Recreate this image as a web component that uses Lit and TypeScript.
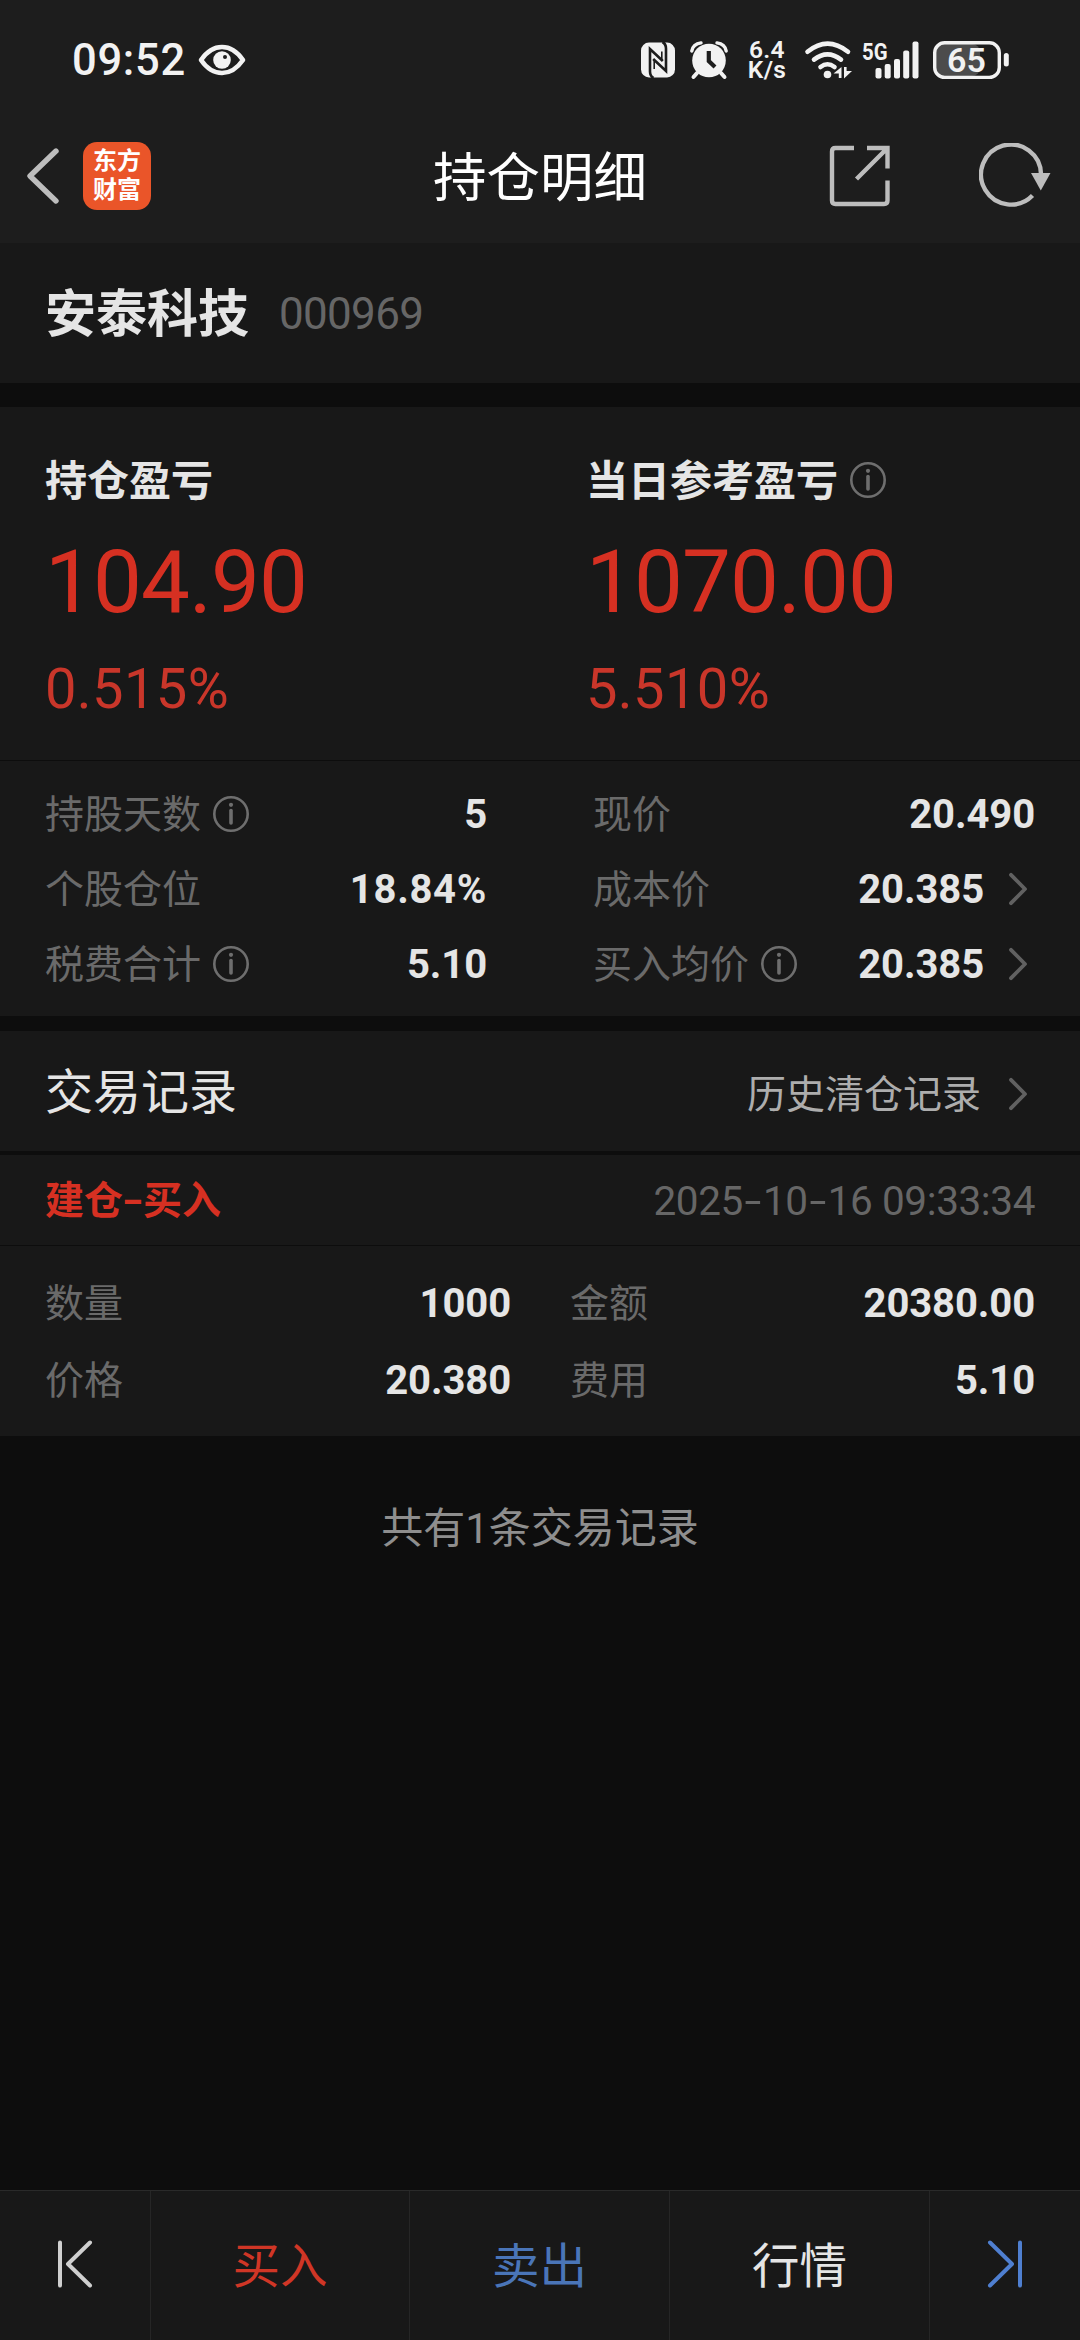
import { LitElement, html, css, svg, nothing } from "lit";
import { customElement, property } from "lit/decorators.js";

interface Stat {
  label: string;
  value: string;
  info?: boolean;
  link?: boolean;
}

const summary = [
  { label: "持仓盈亏", amount: "104.90", rate: "0.515%", info: false },
  { label: "当日参考盈亏", amount: "1070.00", rate: "5.510%", info: true },
];

const leftStats: Stat[] = [
  { label: "持股天数", value: "5", info: true },
  { label: "个股仓位", value: "18.84%" },
  { label: "税费合计", value: "5.10", info: true },
];

const rightStats: Stat[] = [
  { label: "现价", value: "20.490" },
  { label: "成本价", value: "20.385", link: true },
  { label: "买入均价", value: "20.385", info: true, link: true },
];

const tradeLeft: Stat[] = [
  { label: "数量", value: "1000" },
  { label: "价格", value: "20.380" },
];

const tradeRight: Stat[] = [
  { label: "金额", value: "20380.00" },
  { label: "费用", value: "5.10" },
];

const infoIcon = html`<svg class="info" width="38" height="38" viewBox="0 0 38 38">
  <circle cx="19" cy="19" r="16.7" fill="none" stroke="#6e6e6e" stroke-width="2.6" />
  <circle cx="19" cy="9.8" r="2.1" fill="#6e6e6e" />
  <path d="M19 15.5V28" stroke="#6e6e6e" stroke-width="3.6" stroke-linecap="round" />
</svg>`;

const chevron = html`<svg class="chev" width="20" height="34" viewBox="0 0 20 34">
  <path d="M3 2.8L17 17L3 31.2" fill="none" stroke="#616161" stroke-width="3.8" stroke-linecap="round" stroke-linejoin="round" />
</svg>`;

const withDashes = (text: string) =>
  text.split("-").map((part, i) => html`${i ? html`<span class="dash">-</span>` : nothing}${part}`);

@customElement("status-bar")
class StatusBar extends LitElement {
  static styles = css`
    :host {
      display: flex;
      align-items: center;
      box-sizing: border-box;
      height: 119px;
      padding: 0 70px 0 72px;
      color: #f2f2f2;
      font-family: Roboto, "Noto Sans CJK SC", sans-serif;
    }
    .time {
      width: 126px;
      margin-top: 2px;
      font-size: 43.5px;
      font-weight: 500;
      line-height: 50px;
      letter-spacing: 0.7px;
      white-space: nowrap;
    }
    svg {
      display: block;
      flex: none;
      overflow: visible;
    }
    .right {
      display: flex;
      align-items: center;
      margin-left: auto;
    }
    .nfc { margin-right: 15px; }
    .alarm { margin-right: 18px; }
    .speed {
      width: 42px;
      margin-right: 16px;
      font-size: 24.5px;
      font-weight: 600;
      line-height: 20px;
      text-align: center;
      letter-spacing: 0.3px;
    }
    .wifi { margin-right: 10px; }
    .signal { margin-right: 14px; }
    .net { font: 700 24.5px Roboto, sans-serif; }
    .level { font: 600 34px Roboto, sans-serif; }
  `;

  render() {
    return html`
      <span class="time">09:52</span>
      <svg width="48" height="32" viewBox="0 0 48 32">
        <path d="M3 16Q12 3 24 3T45 16Q36 29 24 29T3 16Z" fill="none" stroke="#f2f2f2" stroke-width="4.6" stroke-linejoin="round" />
        <circle cx="24" cy="16" r="8.8" fill="#f2f2f2" />
        <circle cx="27" cy="13" r="2" fill="#1d1d1d" />
      </svg>
      <div class="right">
        <svg class="nfc" width="34" height="36" viewBox="0 0 34 36">
          <rect x="0" y="0.6" width="34" height="34.8" rx="8" fill="#f2f2f2" />
          <g fill="none" stroke="#1d1d1d" stroke-width="2.6">
            <path d="M12.5 36Q9 34 9 29.5V7L21.8 19" />
            <path d="M21.5 0Q25 2 25 6.5V29L12.2 17" />
            <path d="M13.2 17V27M20.8 19V9.5" stroke-width="1.6" />
          </g>
        </svg>
        <svg class="alarm" width="38" height="38" viewBox="0 0 38 38">
          <circle cx="19" cy="19.5" r="16.8" fill="#f2f2f2" />
          <path d="M1.8 10Q3 3 11 1.9M36.2 10Q35 3 27 1.9" fill="none" stroke="#f2f2f2" stroke-width="3.4" stroke-linecap="round" />
          <path d="M7 32L3.5 36M31 32L34.5 36" stroke="#f2f2f2" stroke-width="4" stroke-linecap="round" />
          <path d="M18.8 10V20L25 26" fill="none" stroke="#1d1d1d" stroke-width="4.2" />
        </svg>
        <div class="speed">6.4<br />K/s</div>
        <svg class="wifi" width="48" height="38" viewBox="0 0 48 38">
          <g fill="none" stroke="#f2f2f2" stroke-width="4.6" stroke-linecap="round">
            <path d="M3.5 10.8Q23.5 -5.5 44 10.8" />
            <path d="M10 18.6Q23.5 8 37 18.6" />
            <path d="M16.5 26Q23.5 20.5 30.5 26" />
          </g>
          <circle cx="23.5" cy="33.5" r="3.8" fill="#f2f2f2" />
          <path d="M37.5 26V37H34.8V32.5H29.5ZM40 26H42.6V30H48L40 37.5Z" fill="#f2f2f2" />
        </svg>
        <svg class="signal" width="57" height="38" viewBox="0 0 57 38">
          <text class="net" x="0" y="18.6" fill="#f2f2f2" textLength="25.5" lengthAdjust="spacingAndGlyphs">5G</text>
          ${[[13.5, 27], [22.7, 23], [32, 18], [41.2, 9.5], [50.5, 0.6]].map(
            ([x, y]) => svg`<rect x=${x} y=${y} width="6" height=${37.6 - y} rx="2" fill="#f2f2f2" />`,
          )}
        </svg>
        <svg width="77" height="38" viewBox="0 0 77 38">
          <rect x="3" y="3" width="44" height="32" rx="8" fill="#4c4c4c" />
          <rect x="1.7" y="1.8" width="64.6" height="34.6" rx="10" fill="none" stroke="#f2f2f2" stroke-width="3.4" />
          <rect x="70.8" y="12" width="5" height="13.5" rx="2.5" fill="#f2f2f2" />
          <text class="level" x="33.5" y="31.2" fill="#f2f2f2" text-anchor="middle">65</text>
        </svg>
      </div>
    `;
  }
}

@customElement("nav-bar")
class NavBar extends LitElement {
  static styles = css`
    :host {
      display: grid;
      grid-template-columns: 1fr auto 1fr;
      align-items: center;
      box-sizing: border-box;
      height: 124px;
      padding: 0 29px 10px 25px;
      font-family: Roboto, "Noto Sans CJK SC", sans-serif;
    }
    svg { display: block; }
    .left, .right {
      display: flex;
      align-items: center;
    }
    .left { gap: 22px; }
    .right {
      justify-content: flex-end;
      gap: 88px;
    }
    .logo {
      display: flex;
      align-items: center;
      justify-content: center;
      width: 68px;
      height: 68px;
      border-radius: 14px;
      background: #ea5529;
      color: #fff;
      font-size: 24px;
      font-weight: 700;
      line-height: 29px;
      text-align: center;
    }
    .title {
      margin: 5px -2px 0 2px;
      color: #fff;
      font-size: 53.5px;
      font-weight: 400;
      line-height: 60px;
    }
  `;

  render() {
    return html`
      <div class="left">
        <svg width="36" height="60" viewBox="0 0 36 60">
          <path d="M31 5L5 30L31 55" fill="none" stroke="#bdbdbd" stroke-width="5.4" stroke-linecap="round" stroke-linejoin="round" />
        </svg>
        <div class="logo">东方<br />财富</div>
      </div>
      <div class="title">持仓明细</div>
      <div class="right">
        <svg width="62" height="62" viewBox="0 0 62 62">
          <g fill="none" stroke="#bdbdbd" stroke-width="4.4">
            <path d="M25 3H6.5Q3 3 3 6.5V55.5Q3 59 6.5 59H55Q58.5 59 58.5 55.5V35.5" />
            <path d="M38 3H58.5V23.5M58 3.5L27.5 34" />
          </g>
        </svg>
        <svg width="72" height="66" viewBox="0 0 72 66">
          <path d="M53.5 52.5A30 30 0 1 1 62 31" fill="none" stroke="#bdbdbd" stroke-width="4.4" />
          <path d="M52 30H71.5L61.8 47.5Z" fill="#bdbdbd" />
        </svg>
      </div>
    `;
  }
}

@customElement("stat-list")
class StatList extends LitElement {
  @property({ attribute: false }) items: Stat[] = [];

  static styles = css`
    :host {
      display: block;
      font-family: Roboto, "Noto Sans CJK SC", sans-serif;
    }
    .row {
      display: flex;
      align-items: center;
      height: var(--row-height, 75px);
    }
    .label {
      margin-top: 2px;
      color: #6a6a6a;
      font-size: 39px;
      line-height: 46px;
      white-space: nowrap;
    }
    .info { margin-left: 11px; }
    .value {
      margin-top: 2px;
      margin-left: auto;
      color: #e5e5e5;
      font-size: 40px;
      font-weight: 700;
      line-height: 46px;
      letter-spacing: -0.1px;
    }
    .percent { letter-spacing: 0.7px; }
    .chev { margin: 0 7px 0 24px; }
  `;

  render() {
    return this.items.map(
      (s) => html`<div class="row">
        <span class="label">${s.label}</span>
        ${s.info ? infoIcon : nothing}
        <span class="value ${s.value.endsWith("%") ? "percent" : ""}">${s.value}</span>
        ${s.link ? chevron : nothing}
      </div>`,
    );
  }
}

@customElement("action-bar")
class ActionBar extends LitElement {
  static styles = css`
    :host {
      display: grid;
      grid-template-columns: 151px 259px 260px 260px 150px;
      box-sizing: border-box;
      height: 150px;
      border-top: 1px solid #2a2a2a;
      background: #181818;
      font-family: Roboto, "Noto Sans CJK SC", sans-serif;
    }
    .cell {
      display: flex;
      align-items: center;
      justify-content: center;
      border-right: 1px solid #262626;
      font-size: 47.5px;
      line-height: 56px;
      padding-top: 2px;
    }
    .cell:last-child { border-right: 0; }
    .buy { color: #d03626; }
    .sell { color: #4a75b8; }
    .quote { color: #e5e5e5; }
    .icon { padding: 0 0 4px; }
  `;

  render() {
    return html`
      <div class="cell icon">
        <svg width="36" height="50" viewBox="0 0 36 50">
          <path d="M3 3.5V46.5M33 3.5L11 25L33 46.5" fill="none" stroke="#cfcfcf" stroke-width="4" stroke-linecap="round" stroke-linejoin="round" />
        </svg>
      </div>
      <div class="cell buy">买入</div>
      <div class="cell sell">卖出</div>
      <div class="cell quote">行情</div>
      <div class="cell icon">
        <svg width="36" height="50" viewBox="0 0 36 50">
          <path d="M33 3.5V46.5M3 3.5L25 25L3 46.5" fill="none" stroke="#4f7fd0" stroke-width="4" stroke-linecap="round" stroke-linejoin="round" />
        </svg>
      </div>
    `;
  }
}

@customElement("app-root")
class AppRoot extends LitElement {
  static styles = css`
    :host {
      display: flex;
      flex-direction: column;
      width: 1080px;
      height: 2340px;
      overflow: hidden;
      background: #0d0d0d;
      color: #e5e5e5;
      font-family: Roboto, "Noto Sans CJK SC", sans-serif;
    }
    .top {
      flex: none;
      background: #1d1d1d;
    }
    .panel { background: #181818; }
    .stock {
      display: flex;
      align-items: center;
      height: 140px;
      padding: 0 45px;
      gap: 30px;
    }
    .name {
      margin-top: 4px;
      font-size: 51px;
      font-weight: 700;
      line-height: 60px;
    }
    .code {
      margin-top: 1px;
      color: #666;
      font-size: 44px;
      font-weight: 400;
      line-height: 50px;
      letter-spacing: -0.7px;
    }
    .summary {
      display: grid;
      grid-template-columns: 541px 1fr;
      box-sizing: border-box;
      height: 353px;
      margin-top: 24px;
      padding: 48px 45px 0;
    }
    .caption {
      display: flex;
      align-items: center;
      height: 50px;
      gap: 11px;
      font-size: 42px;
      font-weight: 700;
      line-height: 50px;
    }
    .caption span { margin-top: 4px; }
    .amount {
      margin-top: 25px;
      color: #d63022;
      font-size: 87px;
      font-weight: 400;
      line-height: 104px;
      letter-spacing: -0.9px;
    }
    .rate {
      margin-top: 23px;
      color: #c9362a;
      font-size: 56px;
      line-height: 64px;
      letter-spacing: 0.4px;
    }
    .stats {
      display: grid;
      grid-template-columns: 442px 442px;
      column-gap: 106px;
      margin-top: 1px;
      padding: 15px 45px;
    }
    .records {
      display: flex;
      align-items: center;
      justify-content: space-between;
      height: 120px;
      margin-top: 15px;
      padding: 0 52px 0 45px;
    }
    .heading {
      margin-top: 3px;
      font-size: 48px;
      line-height: 56px;
    }
    .history {
      display: flex;
      align-items: center;
      gap: 27px;
      margin-top: 5px;
      color: #adadad;
      font-size: 39px;
      line-height: 46px;
    }
    .history span { margin-top: 3px; }
    .trade-head {
      display: flex;
      align-items: center;
      justify-content: space-between;
      height: 90px;
      margin-top: 4px;
      padding: 0 45px;
      line-height: 46px;
    }
    .kind {
      margin-top: 2px;
      color: #d63022;
      font-size: 39px;
      font-weight: 700;
    }
    .dash {
      display: inline-block;
      width: 20px;
      text-align: center;
      letter-spacing: 0;
      transform: scaleX(1.5);
    }
    .date {
      margin-top: 1px;
      color: #666;
      font-size: 40.5px;
      font-weight: 400;
      letter-spacing: -0.4px;
    }
    .trade {
      --row-height: 77px;
      display: grid;
      grid-template-columns: 466px 465px;
      column-gap: 59px;
      margin-top: 1px;
      padding: 18px 45px;
    }
    .total {
      margin-top: 68px;
      color: #8e8e8e;
      font-size: 42px;
      line-height: 50px;
      text-align: center;
    }
    action-bar { margin-top: auto; }
  `;

  render() {
    return html`
      <header class="top">
        <status-bar></status-bar>
        <nav-bar></nav-bar>
      </header>
      <section class="panel stock">
        <span class="name">安泰科技</span>
        <span class="code">000969</span>
      </section>
      <section class="panel summary">
        ${summary.map(
          (s) => html`<div>
            <div class="caption"><span>${s.label}</span>${s.info ? infoIcon : nothing}</div>
            <div class="amount">${s.amount}</div>
            <div class="rate">${s.rate}</div>
          </div>`,
        )}
      </section>
      <section class="panel stats">
        <stat-list .items=${leftStats}></stat-list>
        <stat-list .items=${rightStats}></stat-list>
      </section>
      <section class="panel records">
        <span class="heading">交易记录</span>
        <div class="history"><span>历史清仓记录</span>${chevron}</div>
      </section>
      <section class="panel trade-head">
        <span class="kind">${withDashes("建仓-买入")}</span>
        <span class="date">${withDashes("2025-10-16 09:33:34")}</span>
      </section>
      <section class="panel trade">
        <stat-list .items=${tradeLeft}></stat-list>
        <stat-list .items=${tradeRight}></stat-list>
      </section>
      <div class="total">共有1条交易记录</div>
      <action-bar></action-bar>
    `;
  }
}
